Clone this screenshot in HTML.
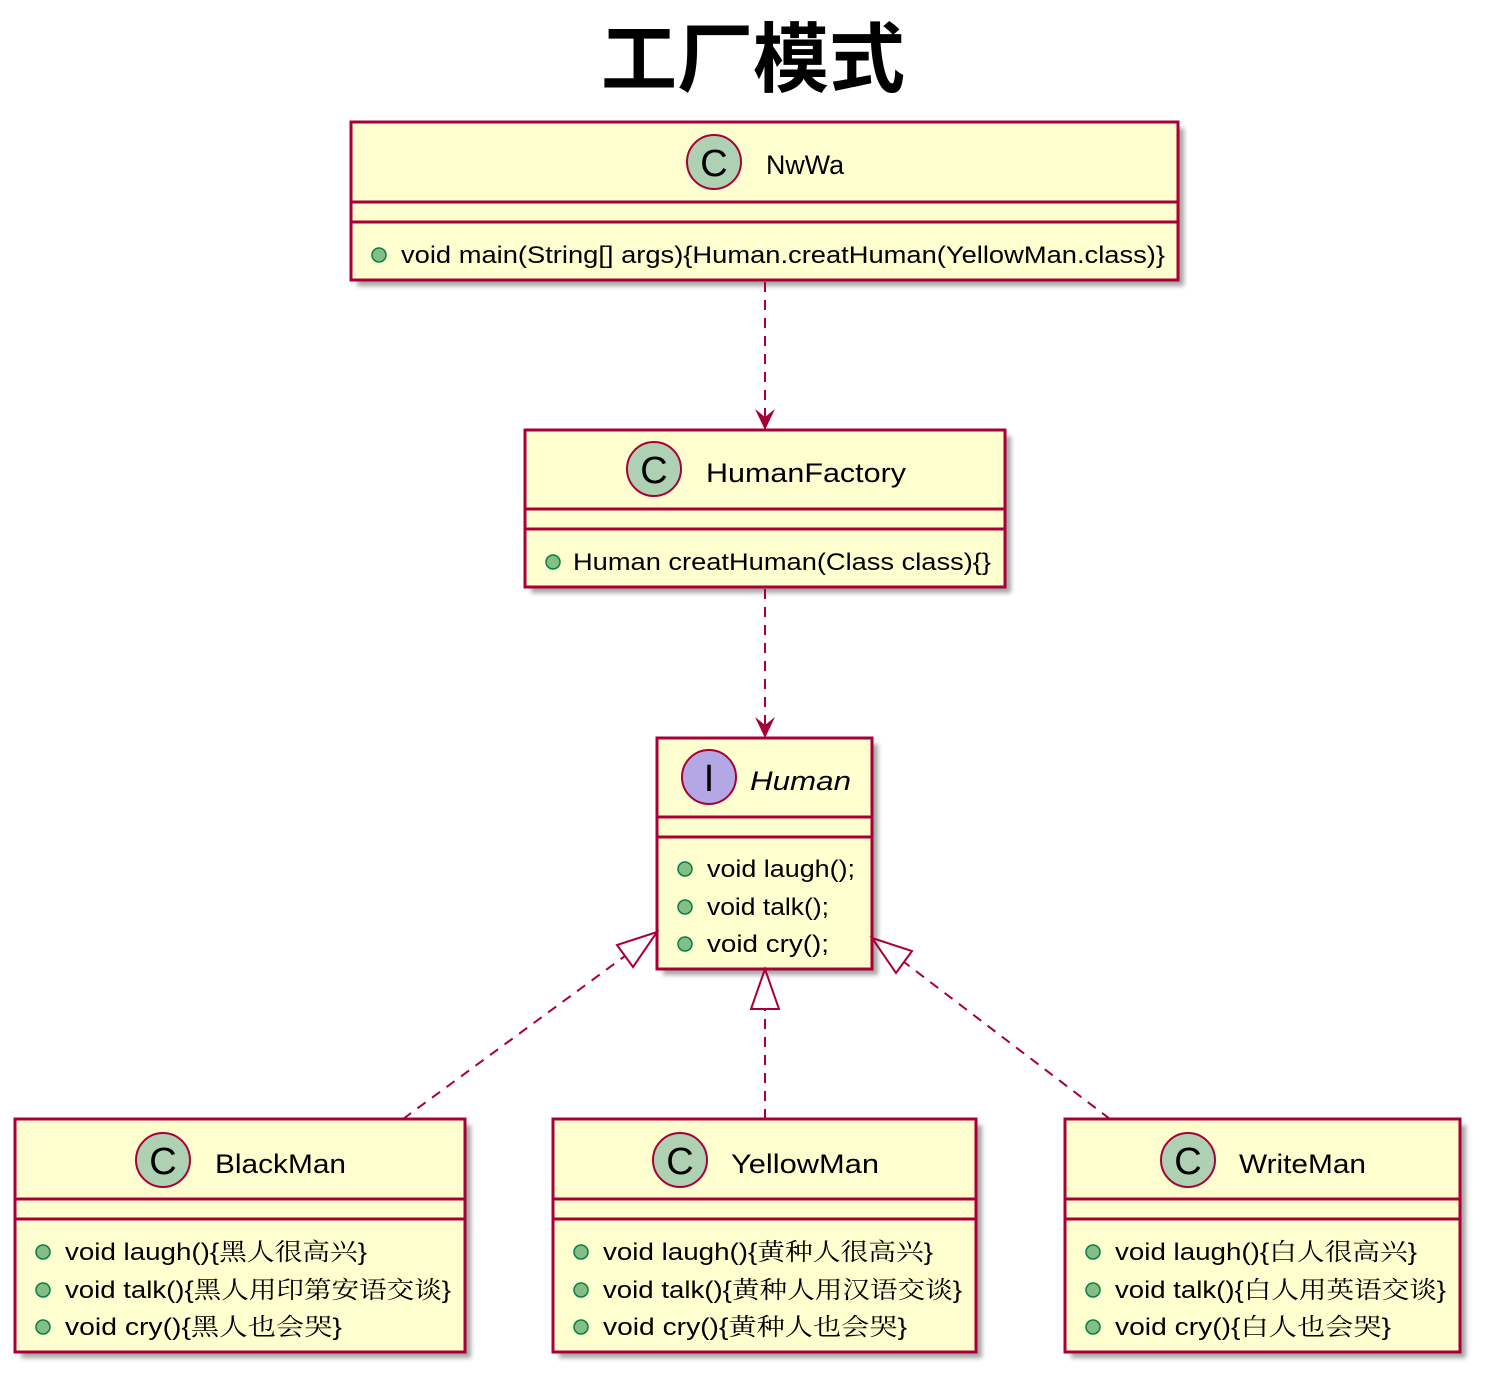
<!DOCTYPE html>
<html><head><meta charset="utf-8"><style>
html,body{margin:0;padding:0;background:#fff;}
svg{display:block;}
text{font-family:"Liberation Sans","Noto Serif CJK SC",sans-serif;fill:#000;}
</style></head><body>
<svg width="1485" height="1377" viewBox="0 0 1485 1377" xmlns="http://www.w3.org/2000/svg">
<defs>
<filter id="sh" x="-10%" y="-10%" width="130%" height="130%"><feGaussianBlur stdDeviation="2.5"/></filter>
</defs>
<text x="753" y="86" font-size="76" font-weight="bold" text-anchor="middle" style="font-family:'Noto Sans CJK SC',sans-serif">工厂模式</text>

<g fill="#000" opacity="0.35" filter="url(#sh)">
<rect x="357" y="128" width="827" height="158"/>
<rect x="531" y="436" width="480" height="157"/>
<rect x="663" y="744" width="215" height="231"/>
<rect x="21" y="1125" width="450" height="233"/>
<rect x="559" y="1125" width="423" height="233"/>
<rect x="1071" y="1125" width="395" height="233"/>
</g>

<g fill="#FEFECE" stroke="#A80036" stroke-width="3">
<rect x="351" y="122" width="827" height="158"/>
<line x1="351" y1="202" x2="1178" y2="202"/><line x1="351" y1="222" x2="1178" y2="222"/>
<rect x="525" y="430" width="480" height="157"/>
<line x1="525" y1="509" x2="1005" y2="509"/><line x1="525" y1="529" x2="1005" y2="529"/>
<rect x="657" y="738" width="215" height="231"/>
<line x1="657" y1="817" x2="872" y2="817"/><line x1="657" y1="837" x2="872" y2="837"/>
<rect x="15" y="1119" width="450" height="233"/>
<line x1="15" y1="1199" x2="465" y2="1199"/><line x1="15" y1="1219" x2="465" y2="1219"/>
<rect x="553" y="1119" width="423" height="233"/>
<line x1="553" y1="1199" x2="976" y2="1199"/><line x1="553" y1="1219" x2="976" y2="1219"/>
<rect x="1065" y="1119" width="395" height="233"/>
<line x1="1065" y1="1199" x2="1460" y2="1199"/><line x1="1065" y1="1219" x2="1460" y2="1219"/>
</g>

<g stroke="#A80036" stroke-width="2">
<circle cx="714" cy="162" r="27" fill="#ADD1B2"/>
<circle cx="654" cy="469" r="27" fill="#ADD1B2"/>
<circle cx="709" cy="777" r="27" fill="#B4A7E5"/>
<circle cx="163" cy="1160" r="27" fill="#ADD1B2"/>
<circle cx="680" cy="1160" r="27" fill="#ADD1B2"/>
<circle cx="1188" cy="1160" r="27" fill="#ADD1B2"/>
</g>
<g font-size="38" text-anchor="middle" style="font-family:'Liberation Serif',serif">
<text x="714" y="176">C</text><text x="654" y="483">C</text><text x="709" y="791">I</text>
<text x="163" y="1174">C</text><text x="680" y="1174">C</text><text x="1188" y="1174">C</text>
</g>
<g font-size="27" lengthAdjust="spacingAndGlyphs">
<text x="766" y="174" textLength="78" lengthAdjust="spacingAndGlyphs">NwWa</text>
<text x="706" y="482" textLength="200" lengthAdjust="spacingAndGlyphs">HumanFactory</text>
<text x="750" y="790" font-style="italic" textLength="101" lengthAdjust="spacingAndGlyphs">Human</text>
<text x="215" y="1173" textLength="131" lengthAdjust="spacingAndGlyphs">BlackMan</text>
<text x="731" y="1173" textLength="148" lengthAdjust="spacingAndGlyphs">YellowMan</text>
<text x="1239" y="1173" textLength="127" lengthAdjust="spacingAndGlyphs">WriteMan</text>
</g>

<g fill="#84BE84" stroke="#038048" stroke-width="1.5">
<circle cx="379" cy="255" r="7"/>
<circle cx="553" cy="562" r="7"/>
<circle cx="685" cy="869" r="7"/><circle cx="685" cy="907" r="7"/><circle cx="685" cy="944" r="7"/>
<circle cx="43" cy="1252" r="7"/><circle cx="43" cy="1290" r="7"/><circle cx="43" cy="1327" r="7"/>
<circle cx="581" cy="1252" r="7"/><circle cx="581" cy="1290" r="7"/><circle cx="581" cy="1327" r="7"/>
<circle cx="1093" cy="1252" r="7"/><circle cx="1093" cy="1290" r="7"/><circle cx="1093" cy="1327" r="7"/>
</g>
<g font-size="24">
<text x="401" y="263" textLength="764" lengthAdjust="spacingAndGlyphs">void main(String[] args){Human.creatHuman(YellowMan.class)}</text>
<text x="573" y="570" textLength="418" lengthAdjust="spacingAndGlyphs">Human creatHuman(Class class){}</text>
<text x="707" y="877" textLength="148" lengthAdjust="spacingAndGlyphs">void laugh();</text>
<text x="707" y="915" textLength="122" lengthAdjust="spacingAndGlyphs">void talk();</text>
<text x="707" y="952" textLength="122" lengthAdjust="spacingAndGlyphs">void cry();</text>
<text x="65" y="1260" textLength="302" lengthAdjust="spacingAndGlyphs">void laugh(){黑人很高兴}</text>
<text x="65" y="1298" textLength="386" lengthAdjust="spacingAndGlyphs">void talk(){黑人用印第安语交谈}</text>
<text x="65" y="1335" textLength="277" lengthAdjust="spacingAndGlyphs">void cry(){黑人也会哭}</text>
<text x="603" y="1260" textLength="330" lengthAdjust="spacingAndGlyphs">void laugh(){黄种人很高兴}</text>
<text x="603" y="1298" textLength="359" lengthAdjust="spacingAndGlyphs">void talk(){黄种人用汉语交谈}</text>
<text x="603" y="1335" textLength="304" lengthAdjust="spacingAndGlyphs">void cry(){黄种人也会哭}</text>
<text x="1115" y="1260" textLength="302" lengthAdjust="spacingAndGlyphs">void laugh(){白人很高兴}</text>
<text x="1115" y="1298" textLength="331" lengthAdjust="spacingAndGlyphs">void talk(){白人用英语交谈}</text>
<text x="1115" y="1335" textLength="276" lengthAdjust="spacingAndGlyphs">void cry(){白人也会哭}</text>
</g>

<g stroke="#A80036" stroke-width="2" stroke-dasharray="10,8" fill="none">
<line x1="765" y1="282" x2="765" y2="425"/>
<line x1="765" y1="589" x2="765" y2="733"/>
<line x1="403" y1="1119" x2="625" y2="956"/>
<line x1="765" y1="1119" x2="765" y2="1009"/>
<line x1="1110" y1="1119" x2="904" y2="962"/>
</g>
<g fill="#A80036">
<polygon points="765,430 755,409 765,417 775,409"/>
<polygon points="765,738 755,717 765,725 775,717"/>
</g>
<g fill="none" stroke="#A80036" stroke-width="2">
<polygon points="657,932 633,967 617,945"/>
<polygon points="765,969 751,1009 779,1009"/>
<polygon points="872,938 912,951 896,973"/>
</g>
</svg>
</body></html>
